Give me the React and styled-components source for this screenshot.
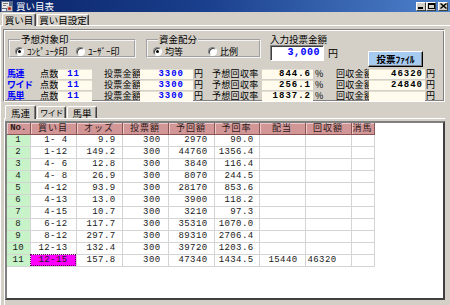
import React from 'react'
import styled, { createGlobalStyle } from 'styled-components'

const jp = `"Noto Sans CJK JP", "DejaVu Sans", sans-serif`
const mono = `"Liberation Mono", "DejaVu Sans Mono", monospace`

const GlobalStyle = createGlobalStyle`
  html, body {
    margin: 0;
    padding: 0;
    background: #d4d0c8;
  }
  * {
    box-sizing: border-box;
  }
`

const Window = styled.div`
  width: 450px;
  height: 305px;
  background: #d4d0c8;
  display: flex;
  flex-direction: column;
  overflow: hidden;
  color: #000;
  font-family: ${jp};
  font-size: 9px;
  line-height: 10px;
`

const TitleBar = styled.div`
  height: 12px;
  display: flex;
  align-items: center;
  background: linear-gradient(90deg, #0a246a 0%, #1a3f8c 45%, #4f82cc 100%);
  color: #fff;
  padding-left: 1px;
`

const TitleText = styled.span`
  margin-left: 3px;
  font-size: 9.5px;
  line-height: 11px;
`

const TitleButtons = styled.div`
  margin-left: auto;
  margin-right: 2px;
  display: flex;
`

const CapButton = styled.div`
  width: 10px;
  height: 9px;
  margin-left: ${(p) => p.$gap || 0}px;
  background: #d4d0c8;
  border: 1px solid;
  border-color: #fff #404040 #404040 #fff;
  display: flex;
  align-items: center;
  justify-content: center;
`

const TabStrip = styled.div`
  height: ${(p) => p.$h}px;
  display: flex;
  align-items: flex-end;
  padding-left: ${(p) => p.$left}px;
  position: relative;
  z-index: 1;
`

const Tab = styled.div`
  width: ${(p) => p.$w}px;
  height: ${(p) => (p.$active ? p.$h : p.$h - 2)}px;
  margin-bottom: ${(p) => (p.$active ? -1 : 0)}px;
  margin-left: ${(p) => p.$ml || 0}px;
  background: #d4d0c8;
  border: 1px solid;
  border-bottom: none;
  border-color: #fff #404040 #404040 #fff;
  border-radius: 2px 2px 0 0;
  box-shadow: inset -1px 0 #808080;
  display: flex;
  align-items: center;
  justify-content: center;
  font-size: ${(p) => p.$fs || 9.5}px;
  letter-spacing: ${(p) => p.$ls || 0}px;
  line-height: 10px;
  white-space: nowrap;
`

const TabPage = styled.div`
  flex: 1;
  border-top: 1px solid #fff;
  border-left: 1px solid #fff;
  padding: 3px 5px 0 2px;
  display: flex;
  flex-direction: column;
`

const Panel = styled.div`
  height: 73px;
  border: 1px solid #808080;
  border-right-color: #fff;
  border-bottom-color: #fff;
  box-shadow: inset 1px 1px #fff, inset -1px -1px #808080;
  display: flex;
  flex-direction: column;
`

const TopRow = styled.div`
  height: 38px;
  display: flex;
  align-items: flex-start;
  padding-top: 5px;
`

const Group = styled.fieldset`
  margin: 0 0 0 ${(p) => p.$ml}px;
  width: ${(p) => p.$w}px;
  height: 23px;
  padding: 0 0 0 ${(p) => p.$pl}px;
  border: 2px groove #f4f4f4;
  display: flex;
  align-items: flex-start;
  legend {
    padding: 0 1px;
    margin-left: 5px;
    font-size: 9.5px;
    line-height: 9px;
  }
`

const RadioItem = styled.label`
  width: ${(p) => p.$w}px;
  height: 9px;
  display: flex;
  align-items: center;
  gap: 3px;
  font-size: 9px;
  line-height: 9px;
  margin-top: 3px;
  white-space: nowrap;
`

const Radio = styled.span`
  flex: none;
  width: 9px;
  height: 9px;
  border-radius: 50%;
  background: #fff;
  border: 1px solid;
  border-color: #808080 #fff #fff #808080;
  box-shadow: inset 1px 1px #404040;
  display: flex;
  align-items: center;
  justify-content: center;
  &::after {
    content: '';
    width: 3px;
    height: 3px;
    border-radius: 50%;
    background: ${(p) => (p.$on ? '#000' : 'transparent')};
  }
`

const AmountBlock = styled.div`
  margin-left: 9px;
  display: flex;
  flex-direction: column;
  gap: 1px;
  font-size: 9.5px;
  line-height: 9px;
`

const AmountRow = styled.div`
  display: flex;
  align-items: center;
  gap: 4px;
  font-size: 10px;
  line-height: 10px;
`

const AmountInput = styled.div`
  width: 54px;
  height: 16px;
  background: #fff;
  border: 1px solid;
  border-color: #808080 #fff #fff #808080;
  box-shadow: inset 1px 1px #404040;
  color: #0000ff;
  font-family: ${mono};
  font-weight: bold;
  font-size: 10px;
  line-height: 14px;
  text-align: right;
  padding-right: 3px;
  letter-spacing: 0.5px;
`

const FileButton = styled.button`
  margin: 16px 0 0 30px;
  width: 55px;
  height: 16px;
  padding: 0;
  background: #a6caf0;
  border: 1px solid;
  border-color: #fff #000 #000 #fff;
  box-shadow: inset -1px -1px #808080;
  font-family: ${jp};
  font-weight: bold;
  font-size: 9.5px;
  line-height: 12px;
  color: #000;
`

const SumRow = styled.div`
  height: 11px;
  display: flex;
  align-items: center;
  padding-left: 3px;
  line-height: 9px;
`

const Kind = styled.span`
  width: 33px;
  color: #0000ff;
  font-weight: bold;
  font-size: 9px;
  letter-spacing: -0.5px;
  white-space: nowrap;
`

const Label = styled.span`
  width: ${(p) => p.$w}px;
  margin-left: ${(p) => p.$ml || 0}px;
  font-size: 9px;
  letter-spacing: 0.3px;
  white-space: nowrap;
`

const ValueBox = styled.span`
  width: ${(p) => p.$w}px;
  height: 10px;
  background: #fffcee;
  border-top: 1px solid #e4e0d4;
  color: ${(p) => (p.$blue ? '#0000ff' : '#000')};
  font-family: ${mono};
  font-weight: bold;
  font-size: 9px;
  line-height: 9px;
  letter-spacing: 1px;
  text-align: right;
  padding-right: ${(p) => p.$pr}px;
`

const LowerTabs = styled(TabStrip)`
  margin-top: 2px;
`

const LowerPage = styled.div`
  flex: 1;
  margin-left: 1px;
  border-top: 1px solid #fff;
  border-left: 1px solid #fff;
  padding-top: 2px;
`

const GridFrame = styled.div`
  width: 440px;
  height: 179px;
  background: #fff;
  border: 2px solid;
  border-color: #808080 #404040 #404040 #808080;
  overflow: hidden;
`

const Table = styled.table`
  border-collapse: collapse;
  table-layout: fixed;
`

const Head = styled.th`
  width: ${(p) => p.$w}px;
  height: 11px;
  padding: 0;
  background: #d29696;
  border-right: 1px solid #8a5454;
  border-bottom: 1px solid #8a5454;
  box-shadow: inset 1px 1px #eccaca;
  color: #2a1a1a;
  font-family: ${(p) => (p.$mono ? mono : jp)};
  font-weight: ${(p) => (p.$mono ? 'bold' : 'normal')};
  font-size: 9px;
  line-height: 10px;
  letter-spacing: ${(p) => (p.$mono ? 0 : 1)}px;
  text-align: center;
`

const Cell = styled.td`
  height: 12px;
  padding: 0 ${(p) => p.$pr || 0}px 0 0;
  background: ${(p) => p.$bg || '#fff'};
  border-right: 1px solid #d4d4d4;
  border-bottom: 1px solid #d4d4d4;
  outline: ${(p) => (p.$focus ? '1px dotted #600060' : 'none')};
  outline-offset: -1px;
  font-family: ${mono};
  font-size: 9px;
  line-height: 11px;
  letter-spacing: 0.4px;
  white-space: pre;
  text-align: ${(p) => p.$align};
  color: #1a1a1a;
`

const columns = [
  { key: 'no', label: 'No.', w: 23, align: 'center', mono: true },
  { key: 'kaime', label: '買い目', w: 46, align: 'center' },
  { key: 'odds', label: 'オッズ', w: 46, align: 'right', pr: 6 },
  { key: 'bet', label: '投票額', w: 46, align: 'right', pr: 7 },
  { key: 'ret', label: '予回額', w: 46, align: 'right', pr: 6 },
  { key: 'rate', label: '予回率', w: 45, align: 'right', pr: 5 },
  { key: 'pay', label: '配当', w: 46, align: 'right', pr: 7 },
  { key: 'got', label: '回収額', w: 46, align: 'right', pr: 14 },
  { key: 'kesi', label: '消馬', w: 23, align: 'center' },
]

const rows = [
  ['1', ' 1- 4', '9.9', '300', '2970', '90.0'],
  ['2', ' 1-12', '149.2', '300', '44760', '1356.4'],
  ['3', ' 4- 6', '12.8', '300', '3840', '116.4'],
  ['4', ' 4- 8', '26.9', '300', '8070', '244.5'],
  ['5', ' 4-12', '93.9', '300', '28170', '853.6'],
  ['6', ' 4-13', '13.0', '300', '3900', '118.2'],
  ['7', ' 4-15', '10.7', '300', '3210', '97.3'],
  ['8', ' 6-12', '117.7', '300', '35310', '1070.0'],
  ['9', ' 8-12', '297.7', '300', '89310', '2706.4'],
  ['10', '12-13', '132.4', '300', '39720', '1203.6'],
  ['11', '12-15', '157.8', '300', '47340', '1434.5', '15440', '46320'],
]

const summary = [
  { kind: '馬連', count: '11', bet: '3300', rate: '844.6', got: '46320' },
  { kind: 'ワイド', count: '11', bet: '3300', rate: '256.1', got: '24840' },
  { kind: '馬単', count: '11', bet: '3300', rate: '1837.2', got: '' },
]

function AppIcon() {
  return (
    <svg width="12" height="11" viewBox="0 0 12 11">
      <rect x="0" y="0" width="12" height="11" fill="#5a6a8a" />
      <rect x="1" y="1" width="7" height="6" fill="#e8e8e8" />
      <rect x="2" y="2" width="5" height="1" fill="#7a7a7a" />
      <rect x="2" y="4" width="3" height="1" fill="#7a7a7a" />
      <rect x="6" y="5" width="5" height="5" fill="#c8c0b0" />
      <circle cx="8.5" cy="7.5" r="1.6" fill="#c02020" />
      <rect x="1" y="8" width="4" height="2" fill="#f0f0f0" />
    </svg>
  )
}

function CapIcon({ type }) {
  if (type === 'min') {
    return (
      <svg width="6" height="6" viewBox="0 0 6 6">
        <rect x="0" y="4" width="5" height="2" fill="#000" />
      </svg>
    )
  }
  if (type === 'max') {
    return (
      <svg width="7" height="6" viewBox="0 0 7 6">
        <rect x="0.5" y="0.5" width="6" height="5" fill="none" stroke="#000" />
        <rect x="0" y="0" width="7" height="2" fill="#000" />
      </svg>
    )
  }
  return (
    <svg width="7" height="6" viewBox="0 0 7 6">
      <path d="M0.5 0.5 L6.5 5.5 M6.5 0.5 L0.5 5.5" stroke="#000" strokeWidth="1.4" />
    </svg>
  )
}

export default function App() {
  return (
    <>
      <GlobalStyle />
      <Window>
        <TitleBar>
          <AppIcon />
          <TitleText>買い目表</TitleText>
          <TitleButtons>
            <CapButton><CapIcon type="min" /></CapButton>
            <CapButton><CapIcon type="max" /></CapButton>
            <CapButton $gap={2}><CapIcon type="close" /></CapButton>
          </TitleButtons>
        </TitleBar>

        <TabStrip $h={13} $left={2}>
          <Tab $active $w={34} $h={13}>買い目</Tab>
          <Tab $w={52} $h={13} $ml={1}>買い目設定</Tab>
        </TabStrip>

        <TabPage>
          <Panel>
            <TopRow>
              <Group $ml={4} $w={128} $pl={5}>
                <legend>予想対象印</legend>
                <RadioItem $w={61}><Radio $on />ｺﾝﾋﾟｭｰﾀ印</RadioItem>
                <RadioItem $w={55}><Radio />ﾕｰｻﾞｰ印</RadioItem>
              </Group>
              <Group $ml={10} $w={115} $pl={5}>
                <legend>資金配分</legend>
                <RadioItem $w={55}><Radio $on />均等</RadioItem>
                <RadioItem $w={40}><Radio />比例</RadioItem>
              </Group>
              <AmountBlock>
                <span>入力投票金額</span>
                <AmountRow>
                  <AmountInput>3,000</AmountInput>
                  <span>円</span>
                </AmountRow>
              </AmountBlock>
              <FileButton>投票ﾌｧｲﾙ</FileButton>
            </TopRow>

            {summary.map((s) => (
              <SumRow key={s.kind}>
                <Kind>{s.kind}</Kind>
                <Label $w={18}>点数</Label>
                <ValueBox $w={34} $blue $pr={12}>{s.count}</ValueBox>
                <Label $w={36} $ml={12}>投票金額</Label>
                <ValueBox $w={53} $blue $pr={9}>{s.bet}</ValueBox>
                <Label $w={18} $ml={1}>円</Label>
                <Label $w={50}>予想回収率</Label>
                <ValueBox $w={51} $pr={2}>{s.rate}</ValueBox>
                <Label $w={21} $ml={2}>%</Label>
                <Label $w={33}>回収金額</Label>
                <ValueBox $w={56} $pr={2}>{s.got}</ValueBox>
                <Label $w={10} $ml={1}>円</Label>
              </SumRow>
            ))}
          </Panel>

          <LowerTabs $h={14} $left={2}>
            <Tab $active $w={31} $h={14}>馬連</Tab>
            <Tab $w={29} $h={14} $ml={1} $fs={8} $ls={-0.5}>ワイド</Tab>
            <Tab $w={30} $h={14} $ml={1}>馬単</Tab>
          </LowerTabs>

          <LowerPage>
            <GridFrame>
              <Table>
                <thead>
                  <tr>
                    {columns.map((c) => (
                      <Head key={c.key} $w={c.w} $mono={c.mono}>{c.label}</Head>
                    ))}
                  </tr>
                </thead>
                <tbody>
                  {rows.map((r) => (
                    <tr key={r[0]}>
                      {columns.map((c, i) => {
                        const isLast = r[0] === '11'
                        let bg = '#fff'
                        if (i === 0) bg = '#c8f2c8'
                        if (i === 1 && isLast) bg = '#ff00ff'
                        return (
                          <Cell
                            key={c.key}
                            $align={c.align}
                            $pr={c.pr}
                            $bg={bg}
                            $focus={i === 1 && isLast}
                          >
                            {r[i] || ''}
                          </Cell>
                        )
                      })}
                    </tr>
                  ))}
                </tbody>
              </Table>
            </GridFrame>
          </LowerPage>
        </TabPage>
      </Window>
    </>
  )
}
